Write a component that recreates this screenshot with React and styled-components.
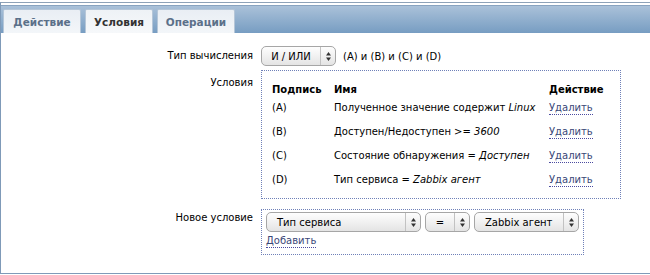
import React from "react";
import styled, { createGlobalStyle } from "styled-components";

const Global = createGlobalStyle`
  html, body { margin: 0; padding: 0; background: #fff; overflow: hidden; }
  body { font-family: "DejaVu Sans", Verdana, sans-serif; font-size: 10px; color: #000; }
`;

const Frame = styled.div`
  margin-top: 2px;
  width: 100%;
  border-top: 1px solid #8ea2b8;
  border-left: 1px solid #7f9ab8;
  border-bottom: 1px solid #7f9ab8;
  padding-top: 2px;
  box-sizing: border-box;
  height: 272px;
  display: flex;
  flex-direction: column;
`;

const Header = styled.div`
  height: 28px;
  box-sizing: border-box;
  border-top: 1px solid #88a3c0;
  background: linear-gradient(#aac1d9, #779dc2);
  display: flex;
  align-items: flex-end;
  gap: 4px;
  padding-left: 2px;
`;

const Tab = styled.div`
  width: ${(p) => p.$w}px;
  height: 24px;
  box-sizing: border-box;
  padding-top: 1px;
  display: flex;
  align-items: center;
  justify-content: center;
  font-weight: bold;
  font-size: 10.5px;
  color: ${(p) => (p.$active ? "#333" : "#5b7089")};
  background: ${(p) =>
    p.$active ? "linear-gradient(#eef2f6, #f6f8fa)" : "linear-gradient(#e9eef4, #f3f6f9)"};
  border: 1px solid #b5c6d8;
  border-bottom: none;
  border-radius: 2px 2px 0 0;
`;

const Body = styled.div`
  flex: 1;
  padding-top: 13px;
  display: flex;
  flex-direction: column;
`;

const FormRow = styled.div`
  display: grid;
  grid-template-columns: 252px auto;
  column-gap: 8px;
  margin-top: ${(p) => p.$mt || 0}px;
  align-items: ${(p) => (p.$center ? "center" : "start")};
`;

const Label = styled.div`
  text-align: right;
  padding-top: ${(p) => p.$pt || 0}px;
  line-height: 14px;
`;

const Inline = styled.div`
  display: flex;
  align-items: center;
  gap: 7px;
`;

const SelectBox = styled.div`
  width: ${(p) => p.$w}px;
  height: 20px;
  box-sizing: border-box;
  border: 1px solid #a6a6a6;
  border-radius: 5px;
  background: linear-gradient(#fefefe, #e4e4e4);
  display: flex;
  align-items: stretch;
  flex-shrink: 0;
`;

const SelectText = styled.div`
  flex: 1;
  display: flex;
  align-items: center;
  justify-content: ${(p) => (p.$center ? "center" : "flex-start")};
  padding-left: ${(p) => (p.$center ? 0 : 10)}px;
  white-space: nowrap;
  overflow: hidden;
`;

const SelectArrow = styled.div`
  width: 14px;
  border-left: 1px solid #c2c2c2;
  display: flex;
  align-items: center;
  justify-content: center;
`;

const Arrows = () => (
  <svg width="5" height="9" viewBox="0 0 5 9">
    <path d="M2.5 0 L5 3.5 L0 3.5 Z" fill="#333" />
    <path d="M2.5 9 L5 5.5 L0 5.5 Z" fill="#333" />
  </svg>
);

const Select = ({ w, children, center }) => (
  <SelectBox $w={w}>
    <SelectText $center={center}>{children}</SelectText>
    <SelectArrow>
      <Arrows />
    </SelectArrow>
  </SelectBox>
);

const DottedBox = styled.div`
  width: ${(p) => p.$w}px;
  box-sizing: border-box;
  border: 1px dotted #6f80b8;
  padding: ${(p) => p.$pad};
`;

const Table = styled.div`
  display: grid;
  grid-template-columns: 62px 215px auto;
`;

const Cell = styled.div`
  height: ${(p) => (p.$head ? 12 : 24)}px;
  line-height: ${(p) => (p.$head ? 12 : 24)}px;
  font-weight: ${(p) => (p.$head ? "bold" : "normal")};
  white-space: nowrap;
`;

const Link = styled.a`
  color: #3a4778;
  text-decoration: none;
  border-bottom: 1px dotted #4b4ba0;
  line-height: 13px;
  display: inline-block;
`;

const SelectRow = styled.div`
  display: flex;
  gap: 4px;
`;

const AddLine = styled.div`
  padding-top: 2px;
  line-height: 13px;
`;

const rows = [
  ["(A)", "Полученное значение содержит ", "Linux"],
  ["(B)", "Доступен/Недоступен >= ", "3600"],
  ["(C)", "Состояние обнаружения = ", "Доступен"],
  ["(D)", "Тип сервиса = ", "Zabbix агент"],
];

export default function App() {
  return (
    <>
      <Global />
      <Frame>
        <Header>
          <Tab $w={78}>Действие</Tab>
          <Tab $w={68} $active>Условия</Tab>
          <Tab $w={78}>Операции</Tab>
        </Header>
        <Body>
          <FormRow $center>
            <Label>Тип вычисления</Label>
            <Inline>
              <Select w={75} center>И / ИЛИ</Select>
              <span>(A) и (B) и (C) и (D)</span>
            </Inline>
          </FormRow>
          <FormRow $mt={4}>
            <Label $pt={6}>Условия</Label>
            <DottedBox $w={360} $pad="13px 10px 6px 10px">
              <Table>
                <Cell $head>Подпись</Cell>
                <Cell $head>Имя</Cell>
                <Cell $head>Действие</Cell>
                {rows.map(([a, b, c]) => (
                  <React.Fragment key={a}>
                    <Cell>{a}</Cell>
                    <Cell>
                      {b}
                      <i>{c}</i>
                    </Cell>
                    <Cell>
                      <Link href="#">Удалить</Link>
                    </Cell>
                  </React.Fragment>
                ))}
              </Table>
            </DottedBox>
          </FormRow>
          <FormRow $mt={10}>
            <Label $pt={2}>Новое условие</Label>
            <DottedBox $w={323} $pad="2px 4px 6px 4px">
              <SelectRow>
                <Select w={155}>Тип сервиса</Select>
                <Select w={45} center>=</Select>
                <Select w={105}>Zabbix агент</Select>
              </SelectRow>
              <AddLine>
                <Link href="#">Добавить</Link>
              </AddLine>
            </DottedBox>
          </FormRow>
        </Body>
      </Frame>
    </>
  );
}
